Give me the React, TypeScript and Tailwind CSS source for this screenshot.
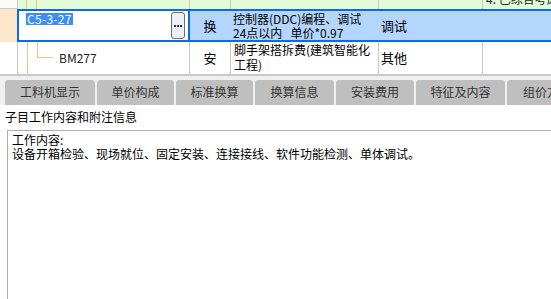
import React from "react";

const tabs: { label: string; w: string }[] = [
  { label: "工料机显示", w: "w-[90px]" },
  { label: "单价构成", w: "w-[77px]" },
  { label: "标准换算", w: "w-[77px]" },
  { label: "换算信息", w: "w-[79px]" },
  { label: "安装费用", w: "w-[78px]" },
  { label: "特征及内容", w: "w-[89px]" },
  { label: "组价方案", w: "w-[80px]" },
];

export default function App() {
  return (
    <div className="w-[551px] h-[299px] overflow-hidden bg-white text-[12px] text-black font-['Noto_Sans_CJK_SC','Noto_Sans',sans-serif]">
      {/* grid */}
      <div className="flex flex-col border-b-2 border-[#c8c8c8]">
        {/* row 0 */}
        <div className="flex h-[9px] overflow-hidden">
          <div className="w-[18px] shrink-0 bg-[#fafafa] border-r border-b border-[#c8c8c8]" />
          <div className="relative w-[172px] shrink-0 bg-[#e3fbd6] border-r border-[#c8c8c8]">
            <div className="absolute left-[8px] top-0 h-full w-px bg-[#f5c27a]" />
            <div className="absolute left-[18px] top-0 h-full w-px bg-[#f5c27a]" />
          </div>
          <div className="w-[41px] shrink-0 bg-[#e3fbd6] border-r border-[#c8c8c8]" />
          <div className="w-[148px] shrink-0 bg-[#e3fbd6] border-r border-[#c8c8c8]" />
          <div className="w-[104px] shrink-0 bg-[#e3fbd6] border-r border-[#c8c8c8]" />
          <div className="flex-1 bg-[#e3fbd6] relative overflow-hidden">
            <div className="absolute left-[3px] top-[-8px] leading-[14px] whitespace-nowrap text-[#222]">4. 已综合考虑</div>
          </div>
        </div>
        {/* row 1 selected */}
        <div className="flex h-[33px]">
          <div className="w-[17px] shrink-0 bg-[#fde7ca]" />
          <div className="flex flex-1 border-y-2 border-[#0b68f2] bg-[#b4d6fd]">
            <div className="w-[173px] shrink-0 bg-white border-x-2 border-[#0b68f2] flex items-start justify-between pl-[7px] pr-[3px] pt-[1px]">
              <span className="bg-[#3a8ef5] text-white leading-[12px] px-[1px] mt-[1px] tracking-[0.3px]">C5-3-27</span>
              <div className="w-[14px] h-[27px] rounded-[3px] border border-[#6f6f6f] bg-[#edf0f8] flex items-center justify-center gap-[1px]">
                <div className="w-[2px] h-[2px] bg-[#333]" />
                <div className="w-[2px] h-[2px] bg-[#333]" />
                <div className="w-[2px] h-[2px] bg-[#333]" />
              </div>
            </div>
            <div className="w-[40px] shrink-0 flex items-center justify-center text-[13px]">换</div>
            <div className="w-[148px] shrink-0 pl-[3px] pt-[1px] leading-[14px] whitespace-nowrap">
              <div>控制器(DDC)编程、调试</div>
              <div>24点以内&nbsp;&nbsp;&nbsp;单价*0.97</div>
            </div>
            <div className="w-[104px] shrink-0 flex items-center pl-[3px] text-[13px]">调试</div>
            <div className="flex-1" />
          </div>
        </div>
        {/* row 2 */}
        <div className="flex h-[32px]">
          <div className="w-[18px] shrink-0 bg-white border-r border-[#c8c8c8]" />
          <div className="relative w-[172px] shrink-0 border-r border-[#c8c8c8] flex items-center pl-[41px]">
            <div className="absolute left-[9px] top-0 h-full w-px bg-[#f5c27a]" />
            <div className="absolute left-[19px] top-0 h-[16px] w-px bg-[#f5c27a]" />
            <div className="absolute left-[19px] top-[15px] h-px w-[16px] bg-[#f5c27a]" />
            <span className="leading-[12px] text-[#222]">BM277</span>
          </div>
          <div className="w-[41px] shrink-0 border-r border-[#c8c8c8] flex items-center justify-center text-[13px]">安</div>
          <div className="w-[148px] shrink-0 border-r border-[#c8c8c8] pl-[3px] pt-[0px] leading-[15px] whitespace-nowrap">
            <div>脚手架搭拆费(建筑智能化</div>
            <div>工程)</div>
          </div>
          <div className="w-[104px] shrink-0 border-r border-[#c8c8c8] flex items-center pl-[2px] text-[13px]">其他</div>
          <div className="flex-1" />
        </div>
      </div>
      {/* tabs */}
      <div className="bg-[#f0f0f0] pt-[4px] pl-[5px] flex gap-[2px] overflow-hidden whitespace-nowrap">
        {tabs.map((t) => (
          <div
            key={t.label}
            className={`${t.w} shrink-0 h-[25px] rounded-t-[3px] bg-[#bfbfbf] flex items-center justify-center text-[#333] text-[12px] font-['Inter','Noto_Sans_CJK_SC',sans-serif]`}
          >
            {t.label}
          </div>
        ))}
      </div>
      {/* label */}
      <div className="pl-[5px] pt-[3px] h-[25px] leading-[18px] text-[12px]">子目工作内容和附注信息</div>
      {/* text box */}
      <div className="ml-[7px] h-[200px] border-l border-t border-[#b0b0b0] pl-[4px] pt-[2px] leading-[14px] text-[12px]">
        <div>工作内容:</div>
        <div>设备开箱检验、现场就位、固定安装、连接接线、软件功能检测、单体调试。</div>
      </div>
    </div>
  );
}
